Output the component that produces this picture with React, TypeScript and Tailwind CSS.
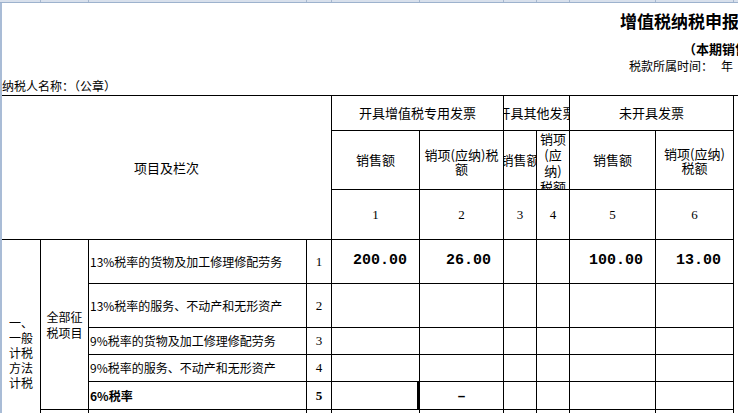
import React from 'react';

interface RowData {
  label: string;
  no: string;
  bold?: boolean;
  values: string[];
}

const rows: RowData[] = [
  { label: '13%税率的货物及加工修理修配劳务', no: '1', values: ['200.00', '26.00', '', '', '100.00', '13.00'] },
  { label: '13%税率的服务、不动产和无形资产', no: '2', values: ['', '', '', '', '', ''] },
  { label: '9%税率的货物及加工修理修配劳务', no: '3', values: ['', '', '', '', '', ''] },
  { label: '9%税率的服务、不动产和无形资产', no: '4', values: ['', '', '', '', '', ''] },
  { label: '6%税率', no: '5', bold: true, values: ['', '–', '', '', '', ''] },
];

const Cell: React.FC<{ className?: string; children?: React.ReactNode }> = ({ className = '', children }) => (
  <div className={`bg-white overflow-hidden flex items-center justify-center text-center ${className}`}>{children}</div>
);

const App: React.FC = () => {
  return (
    <div className="w-[738px] h-[413px] overflow-hidden bg-white text-black font-['Noto_Sans_CJK_SC',sans-serif]">
      {/* 列标题条 */}
      <div className="h-[3px] pl-[2px] bg-[#d8e0ec] border-b border-[#9db2cd]">
        <div className="grid grid-cols-[38px_47px_217px_24px_87px_83px_32px_32px_85px_77px_1fr] gap-px bg-[#a7b8cf] h-[2px]">
          {Array.from({ length: 11 }).map((_, i) => (
            <div key={i} className="bg-[#d8e0ec]" />
          ))}
        </div>
      </div>

      <div className="flex">
        <div className="w-[2px] shrink-0 bg-[#a9bcd6] h-[410px]" />
        <div className="flex-1 min-w-0">
          {/* 表头 */}
          <div className="h-[92px] whitespace-nowrap">
            <div className="h-[34px] flex items-center pl-[618px] text-[17px] font-bold leading-none">
              增值税纳税申报表附列资料（一）
            </div>
            <div className="h-[22px] flex items-center pl-[681px] text-[13px] font-bold leading-none">
              （本期销售情况明细）
            </div>
            <div className="h-[14px] flex items-center pl-[627px] text-[12px] leading-none">
              <span>税款所属时间：</span>
              <span className="ml-[8px]">年</span>
              <span className="ml-[16px]">月</span>
              <span className="ml-[16px]">日</span>
            </div>
            <div className="h-[22px] pt-[3px] flex items-center text-[12px] leading-none">
              纳税人名称：（公章）
            </div>
          </div>

          {/* 表格 */}
          <div className="grid grid-cols-[38px_47px_217px_24px_87px_83px_32px_32px_85px_77px_1fr] grid-rows-[34px_58px_49px_43px_43px_26px_26px_27px_54px] gap-px bg-black border-t border-black text-[13px]">
            <Cell className="col-start-1 col-span-4 row-start-1 row-span-3">项目及栏次</Cell>
            <Cell className="col-start-11 row-start-1 row-span-9" />
            <Cell className="col-start-1 row-start-4 row-span-6 px-[5px] text-[12px] leading-[15px]">
              一、一般计税方法计税
            </Cell>
            <Cell className="col-start-2 row-start-4 row-span-5 px-[4px] text-[12px] leading-[16px]">
              全部征税项目
            </Cell>

            {/* 第一行表头 */}
            <Cell className="col-span-2 whitespace-nowrap">开具增值税专用发票</Cell>
            <Cell className="col-span-2 whitespace-nowrap">开具其他发票</Cell>
            <Cell className="col-span-2 whitespace-nowrap">未开具发票</Cell>

            {/* 第二行表头 */}
            <Cell>销售额</Cell>
            <Cell className="leading-[14px] pt-[4px]">
              销项(应纳)税<br />额
            </Cell>
            <Cell className="whitespace-nowrap">销售额</Cell>
            <Cell className="items-start leading-[16px] whitespace-nowrap">
              <div>
                销项<br />(应<br />纳)<br />税额
              </div>
            </Cell>
            <Cell>销售额</Cell>
            <Cell className="leading-[14px] pt-[2px]">
              销项(应纳)<br />税额
            </Cell>

            {/* 栏次 */}
            {['1', '2', '3', '4', '5', '6'].map((n) => (
              <Cell key={n} className="font-['Liberation_Serif',serif] text-[13px]">
                {n}
              </Cell>
            ))}

            {/* 数据行 */}
            {rows.map((r) => (
              <React.Fragment key={r.no}>
                <Cell className={`justify-start pl-px text-[12px] whitespace-nowrap ${r.bold ? 'font-bold' : ''}`}>
                  {r.label}
                </Cell>
                <Cell className={`font-['Liberation_Serif',serif] text-[13px] ${r.bold ? 'font-bold' : ''}`}>{r.no}</Cell>
                {r.values.map((v, i) => (
                  <Cell
                    key={i}
                    className={`${v === '–' ? 'justify-center text-[13px] pt-[3px]' : 'justify-end pr-[12px]'} font-['Liberation_Mono',monospace] font-bold text-[15px] ${r.bold && i === 0 ? 'border-r-2 border-black' : ''}`}
                  >
                    {v}
                  </Cell>
                ))}
              </React.Fragment>
            ))}

            {/* 下一行(被截断) */}
            {Array.from({ length: 9 }).map((_, i) => (
              <Cell key={i} />
            ))}
          </div>
        </div>
      </div>
    </div>
  );
};

export default App;
